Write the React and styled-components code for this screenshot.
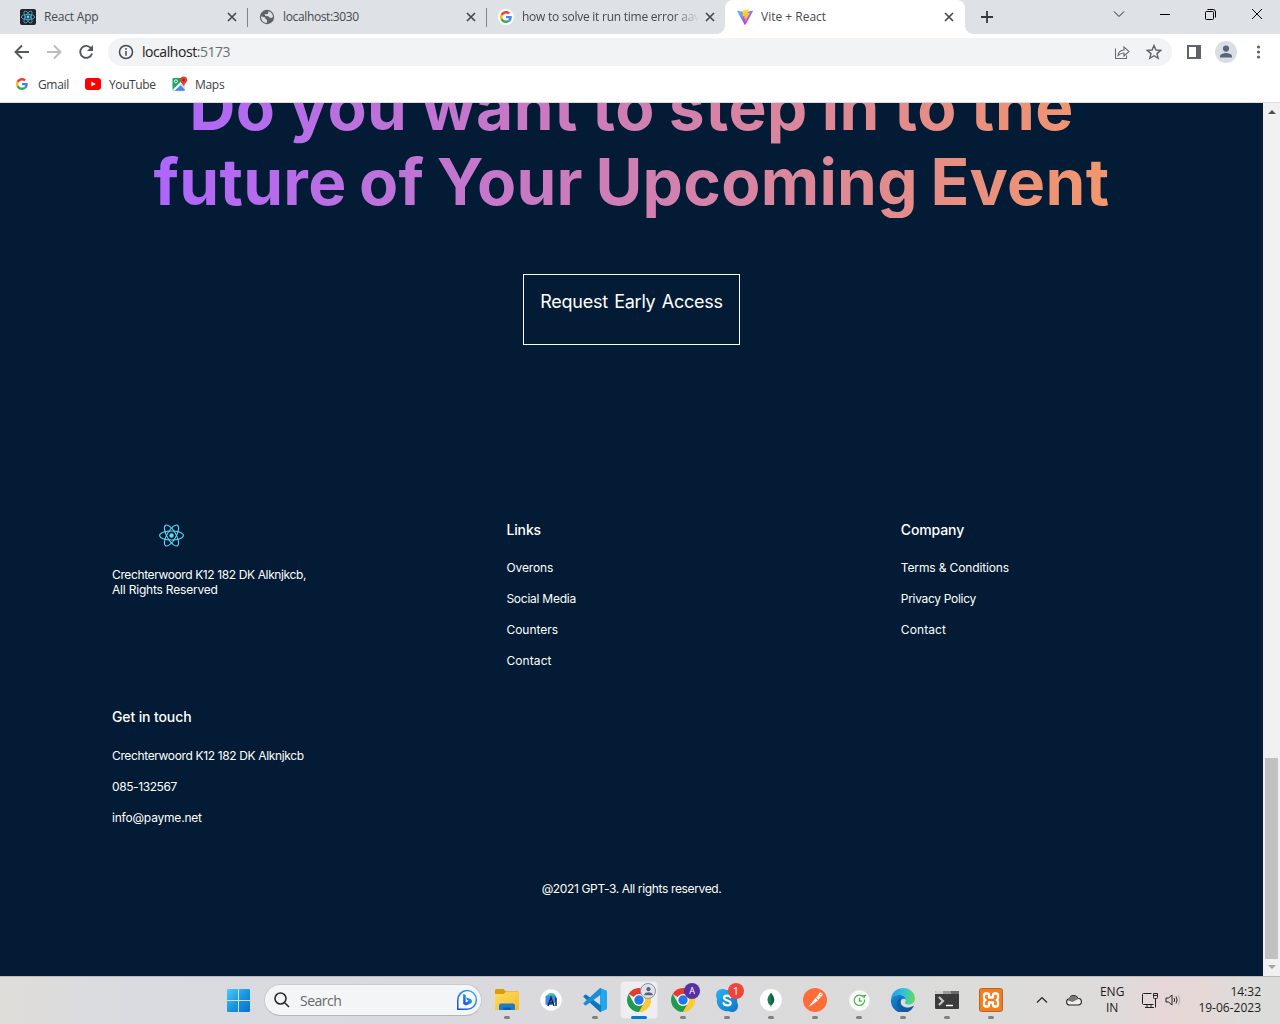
import React from "react";
import styled, { createGlobalStyle, css } from "styled-components";

const Global = createGlobalStyle`
  * { box-sizing: border-box; }
  body { margin: 0; overflow: hidden; }
  h2, h4, p, ul { margin: 0; padding: 0; font-weight: inherit; }
  svg { display: block; flex: none; }
`;

const uiFont = css`font-family: "Open Sans", "Noto Sans", sans-serif;`;
const siteFont = css`font-family: Inter, "Liberation Sans", sans-serif;`;

const Desktop = styled.div`
  width: 1280px; height: 1024px; display: flex; flex-direction: column; overflow: hidden; ${uiFont}
`;

/* ---------- browser chrome ---------- */
const TabStrip = styled.div`
  height: 34px; flex: none; display: flex; background: #dee1e6; padding-left: 8px;
`;
const Tab = styled.div`
  position: relative; display: flex; align-items: center; width: ${p => p.$w || 239}px; height: 34px;
  padding: 0 ${p => p.$end || 10}px 0 ${p => p.$pad || 12}px; color: #45494d;
  background: ${p => (p.$active ? "#fff" : "transparent")};
  border-radius: 8px 8px 0 0;
  ${p => p.$divider && css`&::after { content: ""; position: absolute; right: 0; top: 8px; width: 1px; height: 19px; background: #808387; }`}
  ${p => p.$active && css`
    &::before, &::after { content: ""; position: absolute; bottom: 0; width: 8px; height: 8px; }
    &::before { left: -8px; background: radial-gradient(circle at 0 0, #dee1e6 7.5px, #fff 8px); }
    &::after { right: -8px; background: radial-gradient(circle at 100% 0, #dee1e6 7.5px, #fff 8px); }`}
`;
const TabTitle = styled.span`
  flex: 1; margin-left: 8px; font-size: 12px; line-height: 16px; white-space: nowrap; overflow: hidden;
  letter-spacing: ${p => p.$ls || 0}px;
  ${p => p.$fade && css`-webkit-mask-image: linear-gradient(to right, #000 152px, transparent 177px);`}
`;
const NewTab = styled.div`padding: 11px 0 0 16px; flex: 1;`;
const WindowButtons = styled.div`display: flex; align-items: center; height: 28px; width: 184px;`;
const WinButton = styled.div`width: 46px; display: flex; justify-content: center;`;

const Toolbar = styled.div`
  height: 36px; flex: none; display: flex; align-items: center; background: #fff; padding: 0 12px 0 12px;
`;
const NavButton = styled.div`width: 20px; margin-right: 12px;`;
const AddressBar = styled.div`
  width: 1064px; flex: none; height: 28px; border-radius: 14px; background: #f1f3f4; display: flex; align-items: center; padding: 0 10px;
`;
const Url = styled.span`
  flex: 1; margin-left: 8px; font-size: 14px; line-height: 20px; color: #202124; letter-spacing: -0.44px;
  span { color: #6a6e73; }
`;
const AddressIcons = styled.div`display: flex; gap: 16px; align-items: center;`;
const ToolIcons = styled.div`display: flex; gap: 12px; align-items: center; margin-left: 13px;`;
const Avatar = styled.div`width: 22px; height: 22px; border-radius: 50%; background: #dadee4; display: grid; place-items: center;`;

const Bookmarks = styled.div`
  height: 33px; flex: none; display: flex; align-items: center; background: #fff; border-bottom: 1px solid #dcdde0; padding: 0 0 4px 14px;
`;
const Bookmark = styled.div`
  display: flex; align-items: center; gap: ${p => p.$gap || 8}px; width: ${p => p.$w}px; color: #3c4043; font-size: 12px; letter-spacing: ${p => p.$ls || 0}px;
`;

/* ---------- web page ---------- */
const Viewport = styled.div`flex: 1; min-height: 0; display: flex; overflow: hidden;`;
const Page = styled.main`
  width: 1263px; height: 873px; background: #031b34; color: #fff; ${siteFont} overflow: hidden;
  display: flex; flex-direction: column; align-items: center;
`;
const Headline = styled.h2`
  width: 959px; height: 150px; margin-top: -35px; padding-top: 1px; flex: none; text-align: center;
  font-weight: 700; font-size: 64px; line-height: 75px;
  background: linear-gradient(89.97deg, #ae67fa 1.84%, #f49867 102.67%);
  -webkit-background-clip: text; background-clip: text; color: transparent;
`;
const HeadlineRow = styled.span`
  display: block; white-space: nowrap; letter-spacing: ${p => p.$ls}px; word-spacing: ${p => p.$ws}px;
`;
const AccessButton = styled.div`
  width: 217px; height: 71px; margin-top: 56px; flex: none; border: 1px solid #fff; padding-top: 16px; text-align: center;
  font-size: 18px; line-height: 22px; letter-spacing: -0.25px; word-spacing: 1.5px; white-space: nowrap;
`;
const FooterGrid = styled.footer`
  margin-top: 176px; display: grid; grid-template-columns: repeat(3, 394.4px); padding-left: 112px; align-self: flex-start;
  grid-template-rows: 187px 172px;
`;
const FooterColumn = styled.section`display: flex; flex-direction: column; align-items: flex-start;`;
const FooterLogo = styled.div`width: 118px; height: 29px; display: grid; place-items: center;`;
const FooterTitle = styled.h4`
  font-size: 14px; line-height: 17px; font-weight: 500; letter-spacing: -0.12px; margin: 0 0 ${p => p.$gap || 14}px;
`;
const FooterText = styled.p`
  font-size: 12px; line-height: 15px; letter-spacing: ${p => p.$ls || 0}px; margin: ${p => (p.$flush ? 0 : 8)}px 0; white-space: nowrap;
`;
const Address = styled.div`margin-top: 17px;`;
const Copyright = styled.p`font-size: 12px; line-height: 15px; letter-spacing: -0.36px; margin-top: 1px;`;

const Scrollbar = styled.div`
  width: 17px; background: #f1f1f1; display: flex; flex-direction: column; align-items: center; padding: 6px 0 6px;
  justify-content: space-between;
`;
const Thumb = styled.div`width: 13px; height: 201px; background: #c1c1c1; margin: auto 0 6px;`;

/* ---------- taskbar ---------- */
const Taskbar = styled.div`
  height: 48px; flex: none; display: flex; align-items: center; border-top: 1px solid #b9b9bd; padding: 0 0 1px 227px;
  background: linear-gradient(90deg, #dfddd9 0, #d9dbe0 10%, #dad9dc 50%, #dcdcdb 76%, #dddcdb 86%, #e7d6d7 91%, #e5d8d7 94%, #dcdddb 98%);
`;
const SearchBox = styled.div`
  width: 218px; height: 32px; margin: 0 3px 0 14px; border-radius: 16px; background: #f4f5f6; border: 1px solid #c9cacd; border-bottom-color: #b5b6b9;
  display: flex; align-items: center; padding: 0 3px 0 9px; color: #66686b; font-size: 14px;
  span { flex: 1; margin-left: 10px; letter-spacing: -0.5px; }
`;
const AppSlot = styled.div`
  position: relative; width: 44px; height: 46px; display: flex; justify-content: center; align-items: center; flex: none;
  & > svg { position: relative; }
  ${p => p.$active && css`&::before { content: ""; position: absolute; inset: 4px 3px; border-radius: 4px; background: #eeeef0; border: 1px solid #e2e2e4; }`}
  ${p => !p.$idle && css`&::after { content: ""; position: absolute; bottom: 4px; width: ${p.$active ? 16 : 6}px; height: 3px; border-radius: 2px; background: ${p.$active ? "#0878d3" : "#818184"}; }`}
`;
const Badge = styled.div`
  position: absolute; top: 6px; right: 5px; width: 16px; height: 16px; border-radius: 50%; display: grid; place-items: center;
  background: ${p => p.$bg}; color: #fff; font-size: ${p => p.$size || 9}px; line-height: 16px; font-weight: 500; ${p => p.$ring && "border: 1px solid #8b939c;"}
`;
const Tray = styled.div`flex: 1; display: flex; align-items: center; justify-content: flex-end; padding-right: 19px; color: #1c1c1c;`;
const TrayText = styled.div`
  font-size: 12px; line-height: 16px; text-align: ${p => p.$align || "center"}; margin: 0 0 0 ${p => p.$gap}px; white-space: nowrap;
`;
const TrayIcon = styled.div`margin-left: ${p => p.$gap}px;`;

/* ---------- drawings ---------- */
const ReactMark = ({ size, stroke = 1 }) => (
  <svg width={size} height={size} viewBox="-12 -12 24 24" fill="none" stroke="#61dafb" strokeWidth={stroke}>
    <circle r="2.1" fill="#61dafb" stroke="none" />
    <ellipse rx="11.4" ry="4.3" /><ellipse rx="11.4" ry="4.3" transform="rotate(60)" /><ellipse rx="11.4" ry="4.3" transform="rotate(120)" />
  </svg>
);
const ReactFavicon = () => (
  <svg width="16" height="16" viewBox="-8 -8 16 16" fill="none" stroke="#4fb3cf" strokeWidth=".8">
    <rect x="-8" y="-8" width="16" height="16" rx="2" fill="#20232a" stroke="none" />
    <circle r="1.4" fill="#61dafb" stroke="none" />
    <ellipse rx="6.7" ry="2.6" /><ellipse rx="6.7" ry="2.6" transform="rotate(60)" /><ellipse rx="6.7" ry="2.6" transform="rotate(120)" />
  </svg>
);
const Google = ({ size = 14 }) => (
  <svg width={size} height={size} viewBox="0 0 48 48">
    <path fill="#EA4335" d="M24 9.5c3.54 0 6.71 1.22 9.21 3.6l6.85-6.85C35.9 2.38 30.47 0 24 0 14.62 0 6.51 5.38 2.56 13.22l7.98 6.19C12.43 13.72 17.74 9.5 24 9.5z" />
    <path fill="#4285F4" d="M46.98 24.55c0-1.57-.15-3.09-.38-4.55H24v9.02h12.94c-.58 2.96-2.26 5.48-4.78 7.18l7.73 6c4.51-4.18 7.09-10.36 7.09-17.65z" />
    <path fill="#FBBC05" d="M10.53 28.59A14.5 14.5 0 0 1 9.77 24c0-1.6.27-3.14.76-4.59l-7.98-6.19A24 24 0 0 0 0 24c0 3.88.92 7.54 2.56 10.78z" />
    <path fill="#34A853" d="M24 48c6.48 0 11.93-2.13 15.89-5.81l-7.73-6c-2.15 1.45-4.92 2.3-8.16 2.3-6.26 0-11.57-4.22-13.47-9.91l-7.98 6.19C6.51 42.62 14.62 48 24 48z" />
  </svg>
);
const GoogleDisc = styled.div`width: 16px; height: 16px; border-radius: 50%; background: #fff; display: grid; place-items: center;`;
const Globe = () => (
  <svg width="16" height="16" viewBox="0 0 16 16">
    <circle cx="8" cy="8" r="7.2" fill="#5f6368" />
    <path d="M2 7.2 6.2 8.5 6.6 10.3 8.2 10.8 7.8 14C4.2 13.7 1.9 11 2 7.2M5.5 5.2 8.8 4.9 9.6 2.2C12.2 3 14 5.3 14 8L12.4 9 10.6 8.6 9.2 7.2 6.5 7z" fill="#dee1e6" />
  </svg>
);
const Vite = () => (
  <svg width="16" height="16" viewBox="0 0 256 257">
    <defs>
      <linearGradient id="vite-body" x1="0" y1="0" x2=".6" y2=".8"><stop stopColor="#41d1ff" /><stop offset="1" stopColor="#bd34fe" /></linearGradient>
      <linearGradient id="vite-bolt" x1=".4" y1="0" x2=".5" y2="1"><stop stopColor="#ffea83" /><stop offset=".1" stopColor="#ffdd35" /><stop offset="1" stopColor="#ffa800" /></linearGradient>
    </defs>
    <path fill="url(#vite-body)" d="M255.153 37.938 134.897 252.976c-2.483 4.44-8.862 4.466-11.382.048L.875 37.958c-2.746-4.814 1.371-10.646 6.827-9.67l120.385 21.517a6.537 6.537 0 0 0 2.322-.004l117.867-21.483c5.438-.991 9.574 4.796 6.877 9.62Z" />
    <path fill="url(#vite-bolt)" d="M185.432.063 96.44 17.501a3.268 3.268 0 0 0-2.634 3.014l-5.474 92.456a3.268 3.268 0 0 0 3.997 3.378l24.777-5.718c2.318-.535 4.413 1.507 3.936 3.838l-7.361 36.047c-.495 2.426 1.782 4.5 4.151 3.78l15.304-4.649c2.372-.72 4.652 1.36 4.15 3.788l-11.698 56.621c-.732 3.542 3.979 5.473 5.943 2.437l1.313-2.028 72.516-144.72c1.215-2.423-.88-5.186-3.54-4.672l-25.505 4.922c-2.396.462-4.435-1.77-3.759-4.114l16.646-57.705c.677-2.35-1.37-4.583-3.769-4.113Z" />
  </svg>
);
const Line = ({ w = 16, h = 16, d, color = "#45494d", sw = 1.5 }) => (
  <svg width={w} height={h} viewBox={`0 0 ${w} ${h}`} fill="none" stroke={color} strokeWidth={sw}><path d={d} /></svg>
);
const Cross = () => <Line w={12} h={12} d="M2 2 10 10M10 2 2 10" sw={1.7} />;
const Person = ({ size = 22 }) => (
  <svg width={size} height={size} viewBox="0 0 22 22" fill="#56657a"><circle cx="11" cy="7.6" r="3.1" /><path d="M5 16.600v-1.400c0-2 4-3.200 6-3.200s6 1.200 6 3.200v1.400z" /></svg>
);
const YouTube = () => <svg width="16" height="12" viewBox="0 0 16 12"><rect width="16" height="12" rx="3" fill="#f00" /><path d="M6.3 3.4v5.2L10.8 6z" fill="#fff" /></svg>;
const Maps = () => (
  <svg width="16" height="16" viewBox="0 0 16 16">
    <rect x=".5" y="2" width="12.5" height="12.5" rx="1" fill="#1fa463" />
    <path d="M1 14.5 7 8.2l6 6.3z" fill="#4889f4" /><path d="M.8 13.6 10.5 4l1.5 1.8L3 14.5H1z" fill="#f5f5f5" /><path d="M3.4 14.5 7.3 10.7 11.5 14.5z" fill="#4889f4" />
    <path d="M8.5 9.2 12 6l1 2v6z" fill="#d9dce0" /><circle cx="3.9" cy="5.3" r="1.5" fill="none" stroke="#fff" strokeWidth=".9" />
    <path d="M11.6 10.6C11.3 8 8 6.8 8 4a3.6 3.6 0 0 1 7.2 0c0 2.8-3.3 4-3.6 6.6z" fill="#e34133" /><circle cx="11.6" cy="4" r="1.3" fill="#8e2a22" />
  </svg>
);
const Windows = () => (
  <svg width="23" height="23" viewBox="0 0 23 23">
    <defs><linearGradient id="win" x1="0" y1="0" x2="23" y2="23" gradientUnits="userSpaceOnUse"><stop stopColor="#4cc9fb" /><stop offset=".55" stopColor="#1593de" /><stop offset="1" stopColor="#0870ca" /></linearGradient></defs>
    <path fill="url(#win)" d="M0 1q0-1 1-1h10v11H0zM12 0h10q1 0 1 1v10H12zM0 12h11v11H1q-1 0-1-1zM12 12h11v10q0 1-1 1H12z" />
  </svg>
);
const Bing = () => (
  <svg width="22" height="22" viewBox="0 0 22 22">
    <defs><linearGradient id="bing" x1="0" y1="1" x2="1" y2="0"><stop stopColor="#1b48cd" /><stop offset=".5" stopColor="#237fe9" /><stop offset="1" stopColor="#36b8f0" /></linearGradient></defs>
    <path d="M1.8 20.2V11a9.3 9.3 0 1 1 9.3 9.2z" fill="#f7faff" stroke="url(#bing)" strokeWidth="1.5" />
    <path d="M7.2 4.8 9.7 6v7.5l3-1.7-1.7-.9-1-2.6 4.6 1.8q1.6.8 1.4 2.4-.2 1.3-1.500 2L10 16.600l-2.800-1.700z" fill="url(#bing)" />
  </svg>
);
const Folder = () => (
  <svg width="24" height="22" viewBox="0 0 24 22">
    <defs><linearGradient id="fold" x2="1" y2="1"><stop stopColor="#ffdc65" /><stop offset="1" stopColor="#fabb25" /></linearGradient></defs>
    <path d="M0 1.5Q0 0 1.5 0h7L11 2.5h11.5Q24 2.5 24 4v5H0z" fill="#dc9c08" />
    <path d="M0 5h8.5L11 3h12q1 0 1 1v17H0z" fill="url(#fold)" />
    <path d="M4 21v-4.500Q4 14.500 6 14.500h12q2 0 2 2V21z" fill="#1b7dca" /><path d="M8 21v-1.500q0-1 1-1h6q1 0 1 1V21z" fill="#0b5ca6" />
  </svg>
);
const AndroidStudio = () => (
  <svg width="22" height="22" viewBox="0 0 22 22">
    <circle cx="11" cy="11" r="10.700" fill="#fff" /><path d="M7.300 7a4 3 0 0 1 8 0z" fill="#3ad684" />
    <path d="M6.500 6.500H15q1 0 1 1v5l-4 3.500H6.500q-1 0-1-1v-7.500q0-1 1-1z" fill="#4285f4" />
    <path d="M8 17 11 8.500 14 17M9.500 14h3.500M16 8.500V17" fill="none" stroke="#102a3c" strokeWidth="1.500" />
  </svg>
);
const VSCode = () => (
  <svg width="24" height="24" viewBox="0 0 24 24">
    <path d="M17 0 23.500 2.500Q24 3 24 4v16q0 1-.6 1.500L17 24z" fill="#26a5ee" />
    <path d="M.5 8 2 6.700q.7-.5 1.300 0L18 17.500V24q-.8 0-1.500-.6L.5 9z" fill="#0878be" />
    <path d="M.5 16 2 17.300q.7.5 1.300 0L18 6.500V0q-.8 0-1.500.6L.5 15z" fill="#1b8dd5" />
  </svg>
);
const Chrome = () => (
  <svg width="24" height="24" viewBox="0 0 24 24">
    <path d="M12 12 1.610 6A12 12 0 0 1 22.390 6z" fill="#e33b2e" />
    <path d="M12 12V6h10.390A12 12 0 0 1 12 24z" fill="#fcc934" />
    <path d="M1.610 6 6.800 15 12 18 17.200 15 12 24A12 12 0 0 1 1.610 6z" fill="#1e9b4b" />
    <path d="M17.200 15 12 24A12 12 0 0 0 22.390 6H12z" fill="#fcc934" />
    <circle cx="12" cy="12" r="6" fill="#fff" /><circle cx="12" cy="12" r="4.700" fill="#2379e8" />
  </svg>
);
const Skype = () => (
  <svg width="22" height="23" viewBox="0 0 22 23">
    <defs><linearGradient id="skype" x2="1" y2="1"><stop stopColor="#2bb1f1" /><stop offset="1" stopColor="#0a75ca" /></linearGradient></defs>
    <path d="M6 0q3 0 4.200 1A10.400 10.400 0 0 1 21 13q1 1.500 1 4a6 6 0 0 1-9 5.200A10.400 10.400 0 0 1 1 10Q0 8 0 6a6 6 0 0 1 6-6z" fill="url(#skype)" />
    <path d="M14.500 8.300C13.500 5.800 7.800 6 8 9c.2 3.100 6.800 1.900 6.700 5 0 3-6.300 3.100-7.200.2" fill="none" stroke="#fff" strokeWidth="2.200" strokeLinecap="round" />
  </svg>
);
const Mongo = () => (
  <svg width="22" height="22" viewBox="0 0 22 22"><circle cx="11" cy="11" r="11" fill="#fff" /><path d="M11 3.500c1 2 3.300 3.800 3.300 7.500 0 3-2 4.700-3.100 5.600L11 18.500l-.3-1.900C9.500 15.700 7.700 14 7.700 11c0-3.700 2.500-5.500 3.300-7.500z" fill="#116149" /><path d="M11 5v13.500l-.3-1.900C9.500 15.700 7.700 14 7.700 11 7.700 8 10.200 7 11 5z" fill="#13804f" /></svg>
);
const Postman = () => (
  <svg width="24" height="24" viewBox="0 0 24 24"><circle cx="12" cy="12" r="12" fill="#ff6c37" /><path d="M5.500 18.800 12.500 10l2.500 2.500-6.500 4.700zM13 9.500l2.500-2.500 2.300 2.300-2.500 2.500z" fill="#fff" /><circle cx="17.600" cy="6.500" r="2.100" fill="#fff" /><path d="m17.300 6.700 1.800-1" stroke="#ff6c37" strokeWidth=".8" /></svg>
);
const ClockApp = () => (
  <svg width="21" height="21" viewBox="0 0 21 21" fill="none" stroke="#4caf43" strokeWidth="1.200"><circle cx="10.500" cy="10.500" r="10.200" fill="#fafafa" stroke="#eee" strokeWidth=".5" /><path d="M14.300 6.900A5.200 5.200 0 1 0 15.500 9.500M10.500 7.800v3.400H13M12.800 5.800l3.500-.3-1.800 2.600" /></svg>
);
const Edge = () => (
  <svg width="24" height="24" viewBox="0 0 24 24">
    <defs>
      <linearGradient id="edge-top" x1="0" y1=".4" x2="1" y2=".5"><stop stopColor="#249bde" /><stop offset=".5" stopColor="#2fc2df" /><stop offset="1" stopColor="#62dc54" /></linearGradient>
      <linearGradient id="edge-low" x2="1" y2="1"><stop stopColor="#168bd7" /><stop offset="1" stopColor="#0c4a9b" /></linearGradient>
    </defs>
    <path d="M0 11.500C.4 5 5.500 0 12 0c7 0 12 5 12 10.500 0 3.500-2.700 6-6 6-2.700 0-4.400-1-4.200-1.800.2-.5 1-1 1-2.700 0-3-3-5-6.300-5C4.500 7 1 8.500 0 11.500z" fill="url(#edge-top)" />
    <path d="M0 12C.5 8.500 4 7 8.500 7c4 0 6.300 2.500 6.300 5-.5-1.500-3.300-2-4.600 0-1.800 3 .8 7 5.300 7.500 3 .3 5.300-1 6.500-1.600.6-.3 1 .2.600.7A12 12 0 0 1 0 12z" fill="url(#edge-low)" />
    <path d="M8.500 10C4.300 14 5.500 21.500 12 24c4.500 0 8-2 10.300-5C14 22.500 7 17.500 10.200 12z" fill="#10589f" opacity=".75" />
  </svg>
);
const Terminal = () => (
  <svg width="24" height="18" viewBox="0 0 24 18"><rect width="24" height="18" rx="1" fill="#3b3b3b" /><path d="M0 3V1q0-1 1-1h7v3z" fill="#cfcfcf" /><path d="M8 0h8v3H8z" fill="#9b9b9b" /><path d="M16 0h7q1 0 1 1v2h-8z" fill="#6b6b6b" /><path d="m4 6 4 4-4 4" fill="none" stroke="#c9c9c9" strokeWidth="2.200" /><path d="M11 14.500h7" stroke="#fff" strokeWidth="1.500" /></svg>
);
const Xampp = () => (
  <svg width="24" height="24" viewBox="0 0 24 24"><rect x=".5" y=".5" width="23" height="23" rx="2" fill="#f37e20" stroke="#b9651f" /><path d="M7 5.500h1.500Q10 5.500 10 7v2.500h4V7q0-1.500 1.500-1.500H17q2 0 2 2V9.500q0 2-1.500 2.500 1.500.5 1.500 2.500v2q0 2-2 2h-1.500Q14 18.500 14 17v-2.500h-4V17q0 1.500-1.500 1.500H7q-2 0-2-2v-2q0-2 1.500-2.500Q5 11.500 5 9.500v-2q0-2 2-2z" fill="none" stroke="#fff" strokeWidth="2.300" strokeLinejoin="round" /></svg>
);
const Cloud = () => (
  <svg width="16" height="12" viewBox="0 0 16 12" stroke="#222" strokeWidth="1.100"><path d="M3.800 11Q.6 11 .6 8t3-3.200C4.500 1 10 .2 11.800 4.300c2.500 0 3.600 1.600 3.600 3.500S14 11 12 11z" fill="#eee" /><path d="M2 6.500C3.500 1 10 .2 11.800 4.300l1 .4L6.500 8z" fill="#777" stroke="none" /></svg>
);
const Network = () => (
  <svg width="17" height="17" viewBox="0 0 17 17" fill="none" stroke="#222" strokeWidth="1"><path d="M10.500 1.500h-8q-1 0-1 1v9q0 1 1 1h10M6 12.500v3M10 12.500v3M4 15.500h9M12.500 1.500h4v4q0 1-1 1h-2q-1 0-1-1zM14.500 6.500v9M12.500 3.500h4" /></svg>
);
const Volume = () => (
  <svg width="17" height="14" viewBox="0 0 17 14" fill="none" stroke="#222" strokeWidth="1"><path d="M1 5h2.500L7 2v10L3.500 9H1zM9 5q1.300 2 0 4M11 3.500q2.300 3.500 0 7" /><path d="M13 2q3.500 5 0 10" stroke="#aaa" /></svg>
);

const tabs = [
  { icon: <ReactFavicon />, title: "React App", divider: true, w: 240, ls: -0.2 },
  { icon: <Globe />, title: "localhost:3030", divider: true, w: 239, pad: 11, ls: -0.36 },
  { icon: <GoogleDisc><Google size={12} /></GoogleDisc>, title: "how to solve it run time error aav", w: 238, pad: 11, end: 9, fade: true, ls: -0.24 },
  { icon: <Vite />, title: "Vite + React", active: true, w: 240 },
];
const links = [["Overons", -0.1], ["Social Media", -0.25], ["Counters", 0], ["Contact", 0.1]];
const company = [["Terms & Conditions", -0.13], ["Privacy Policy", -0.3], ["Contact", 0.1]];
const contact = [["Crechterwoord K12 182 DK Alknjkcb", -0.36], ["085-132567", -0.4], ["info@payme.net", -0.2]];
const apps = [
  { icon: <Folder /> },
  { icon: <AndroidStudio />, idle: true },
  { icon: <VSCode /> },
  { icon: <Chrome />, active: true, badge: <Badge $bg="#dfe3e8" $ring><Person size={15} /></Badge> },
  { icon: <Chrome />, badge: <Badge $bg="#5630a5">A</Badge> },
  { icon: <Skype />, badge: <Badge $bg="#f04438" $size={11}>1</Badge> },
  { icon: <Mongo /> }, { icon: <Postman /> }, { icon: <ClockApp /> }, { icon: <Edge /> }, { icon: <Terminal /> }, { icon: <Xampp /> },
];

const TextList = ({ items }) => items.map(([text, ls]) => <FooterText key={text} $ls={ls}>{text}</FooterText>);

export default function App() {
  return (
    <Desktop>
      <Global />
      <TabStrip>
        {tabs.map(t => (
          <Tab key={t.title} $active={t.active} $divider={t.divider} $w={t.w} $pad={t.pad} $end={t.end}>
            {t.icon}<TabTitle $fade={t.fade} $ls={t.ls}>{t.title}</TabTitle><Cross />
          </Tab>
        ))}
        <NewTab><Line w={12} h={12} d="M6 0v12M0 6h12" sw={1.8} color="#35383b" /></NewTab>
        <WindowButtons>
          <WinButton><Line w={12} h={8} d="M1 1.500 6 6.500 11 1.500" sw={1} color="#222" /></WinButton>
          <WinButton><Line w={10} h={3} d="M0 1.500h10" sw={1} color="#000" /></WinButton>
          <WinButton><Line w={12} h={11} d="M2.500.5H8Q10.500.5 10.500 3v5.500M1.500 2.500h6q1 0 1 1v6q0 1-1 1h-6q-1 0-1-1v-6q0-1 1-1z" sw={1} color="#000" /></WinButton>
          <WinButton><Line w={12} h={12} d="M1 1 11 11M11 1 1 11" sw={1} color="#000" /></WinButton>
        </WindowButtons>
      </TabStrip>
      <Toolbar>
        <NavButton><Line w={20} h={16} d="M17 8H4M10 1.500 3.500 8 10 14.500" sw={1.900} color="#54585c" /></NavButton>
        <NavButton><Line w={20} h={16} d="M3 8h13M10 1.500 16.500 8 10 14.500" sw={1.900} color="#bbbdbf" /></NavButton>
        <NavButton>
          <svg width="20" height="16" viewBox="0 0 20 16"><path d="M15.200 4.500A6 6 0 1 0 16 9.500" fill="none" stroke="#54585c" strokeWidth="1.900" /><path d="M17 1v6h-6z" fill="#54585c" /></svg>
        </NavButton>
        <AddressBar>
          <Line d="M8 1.500a6.500 6.500 0 1 0 0 13 6.500 6.500 0 0 0 0-13M8 7v4.800M8 4v1.700" />
          <Url>localhost<span>:5173</span></Url>
          <AddressIcons>
            <Line d="M1.500 4.500v10h11v-3M4 11.500q.5-5 6-5.500V3l5 4.500-5 4.500V9Q6.500 9 4 11.500z" sw={1.100} color="#6a6d70" />
            <Line d="M8 1.500 9.900 6 14.700 6.400 11 9.600 12.200 14.300 8 11.700 3.800 14.300 5 9.600 1.300 6.400 6.100 6z" sw={1.400} color="#5f6368" />
          </AddressIcons>
        </AddressBar>
        <ToolIcons>
          <svg width="18" height="14" viewBox="0 0 18 14"><path d="M2 0h14v14H2z" fill="#5f6368" /><path d="M4 2h7v10H4z" fill="#fff" /></svg>
          <Avatar><Person /></Avatar>
          <svg width="18" height="14" viewBox="0 0 18 14" fill="#5f6368"><circle cx="9.500" cy="2" r="1.600" /><circle cx="9.500" cy="7" r="1.600" /><circle cx="9.500" cy="12" r="1.600" /></svg>
        </ToolIcons>
      </Toolbar>
      <Bookmarks>
        <Bookmark $w={71} $ls={-0.35}><svg width="16" height="14"><g transform="translate(2 1)"><Google size={12} /></g></svg>Gmail</Bookmark>
        <Bookmark $w={87} $ls={-0.4}><YouTube />YouTube</Bookmark>
        <Bookmark $w={80} $gap={7} $ls={-0.3}><Maps />Maps</Bookmark>
      </Bookmarks>
      <Viewport>
        <Page>
          <Headline>
            <HeadlineRow $ls={0.45} $ws={-1.6}>Do you want to step in to the</HeadlineRow>
            <HeadlineRow $ls={0.3} $ws={-3}>future of Your Upcoming Event</HeadlineRow>
          </Headline>
          <AccessButton>Request Early Access</AccessButton>
          <FooterGrid>
            <FooterColumn>
              <FooterLogo><ReactMark size={25} /></FooterLogo>
              <Address>
                <FooterText $flush $ls={-0.38}>Crechterwoord K12 182 DK Alknjkcb,</FooterText>
                <FooterText $flush $ls={-0.2}>All Rights Reserved</FooterText>
              </Address>
            </FooterColumn>
            <FooterColumn>
              <FooterTitle>Links</FooterTitle>
              <TextList items={links} />
            </FooterColumn>
            <FooterColumn>
              <FooterTitle>Company</FooterTitle>
              <TextList items={company} />
            </FooterColumn>
            <FooterColumn>
              <FooterTitle $gap={15}>Get in touch</FooterTitle>
              <TextList items={contact} />
            </FooterColumn>
          </FooterGrid>
          <Copyright>@2021 GPT-3. All rights reserved.</Copyright>
        </Page>
        <Scrollbar>
          <svg width="8" height="5" viewBox="0 0 8 5"><path d="M0 5 4 1l4 4z" fill="#505050" /></svg>
          <Thumb />
          <svg width="8" height="5" viewBox="0 0 8 5"><path d="m0 0 4 4 4-4z" fill="#a3a3a3" /></svg>
        </Scrollbar>
      </Viewport>
      <Taskbar>
        <Windows />
        <SearchBox><Line d="M6.500 1a5.500 5.500 0 1 0 0 11 5.500 5.500 0 0 0 0-11M10.500 10.500l4.500 4.500" color="#2b2b2b" sw={1.600} /><span>Search</span><Bing /></SearchBox>
        {apps.map((a, i) => <AppSlot key={i} $active={a.active} $idle={a.idle}>{a.icon}{a.badge}</AppSlot>)}
        <Tray>
          <TrayIcon $gap={0}><Line w={12} h={8} d="M1 6.500 6 1.500 11 6.500" sw={1.200} color="#222" /></TrayIcon>
          <TrayIcon $gap={18}><Cloud /></TrayIcon>
          <TrayText $gap={18}>ENG<br />IN</TrayText>
          <TrayIcon $gap={17}><Network /></TrayIcon>
          <TrayIcon $gap={7}><Volume /></TrayIcon>
          <TrayText $gap={16} $align="right">14:32<br />19-06-2023</TrayText>
        </Tray>
      </Taskbar>
    </Desktop>
  );
}
